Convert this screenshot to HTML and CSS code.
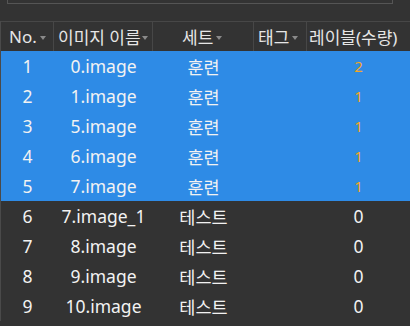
FILE: index.html
```html
<!DOCTYPE html>
<html>
  <head>
    <title>Image List</title>
    <link rel="stylesheet" href="styles.css">
  </head>
  <body>
    <div class="search-box"></div>
    <div class="grid">
      <div class="head-row">
        <div class="head-cell col-no">No.<span class="sort"></span></div>
        <div class="head-cell col-name">이미지 이름<span class="sort"></span></div>
        <div class="head-cell col-set">세트<span class="sort"></span></div>
        <div class="head-cell col-tag">태그<span class="sort"></span></div>
        <div class="head-cell col-label">레이블(수량)</div>
      </div>

      <div class="row selected">
        <div class="cell">1</div><div class="cell">0.image</div><div class="cell">훈련</div><div class="cell"></div><div class="cell count">2</div>
      </div>
      <div class="row selected">
        <div class="cell">2</div><div class="cell">1.image</div><div class="cell">훈련</div><div class="cell"></div><div class="cell count">1</div>
      </div>
      <div class="row selected">
        <div class="cell">3</div><div class="cell">5.image</div><div class="cell">훈련</div><div class="cell"></div><div class="cell count">1</div>
      </div>
      <div class="row selected">
        <div class="cell">4</div><div class="cell">6.image</div><div class="cell">훈련</div><div class="cell"></div><div class="cell count">1</div>
      </div>
      <div class="row selected">
        <div class="cell">5</div><div class="cell">7.image</div><div class="cell">훈련</div><div class="cell"></div><div class="cell count">1</div>
      </div>
      <div class="row">
        <div class="cell">6</div><div class="cell">7.image_1</div><div class="cell">테스트</div><div class="cell"></div><div class="cell">0</div>
      </div>
      <div class="row">
        <div class="cell">7</div><div class="cell">8.image</div><div class="cell">테스트</div><div class="cell"></div><div class="cell">0</div>
      </div>
      <div class="row">
        <div class="cell">8</div><div class="cell">9.image</div><div class="cell">테스트</div><div class="cell"></div><div class="cell">0</div>
      </div>
      <div class="row">
        <div class="cell">9</div><div class="cell">10.image</div><div class="cell">테스트</div><div class="cell"></div><div class="cell">0</div>
      </div>
    </div>
  </body>
</html>
```

FILE: styles.css
```css
body {
  background-color: #333333;
  font-family: "Noto Sans", "Noto Sans CJK KR", sans-serif;
  margin: 0;
  overflow: hidden;
  color: #f2f2f2;
}

.search-box {
  height: 3px;
  margin: 0 17px 17px 7px;
  border: 1px solid #555555;
  border-top: none;
}

.grid {
  border-left: 1px solid #4a4a4a;
}

.head-row,
.row {
  display: grid;
  grid-template-columns: 53px 99px 101px 53px 103px;
  height: 30px;
}

.head-row {
  border-top: 1px solid #474747;
  height: 29px;
  color: #e6e6e6;
  font-size: 17px;
}

.head-cell {
  display: flex;
  align-items: center;
  border-right: 1px solid #474747;
  white-space: nowrap;
  overflow: visible;
  position: relative;
}

.col-no {
  padding-left: 8px;
}

.col-name {
  padding-left: 4px;
}

.col-set {
  padding-left: 29px;
}

.col-tag {
  padding-left: 4px;
}

.col-label {
  padding-left: 2px;
  border-right: none;
  overflow: hidden;
}

.sort {
  display: inline-block;
  width: 0;
  height: 0;
  margin-left: 3px;
  margin-top: 2px;
  border-left: 3px solid transparent;
  border-right: 3px solid transparent;
  border-top: 4px solid #8a8a8a;
}

.col-name .sort {
  margin-left: 1px;
}

.row {
  font-size: 17.5px;
}

.row.selected {
  background-color: #2e8be6;
}

.cell {
  display: flex;
  align-items: center;
  justify-content: center;
  white-space: nowrap;
}

.count {
  color: #f5a623;
  font-size: 15px;
}
```
